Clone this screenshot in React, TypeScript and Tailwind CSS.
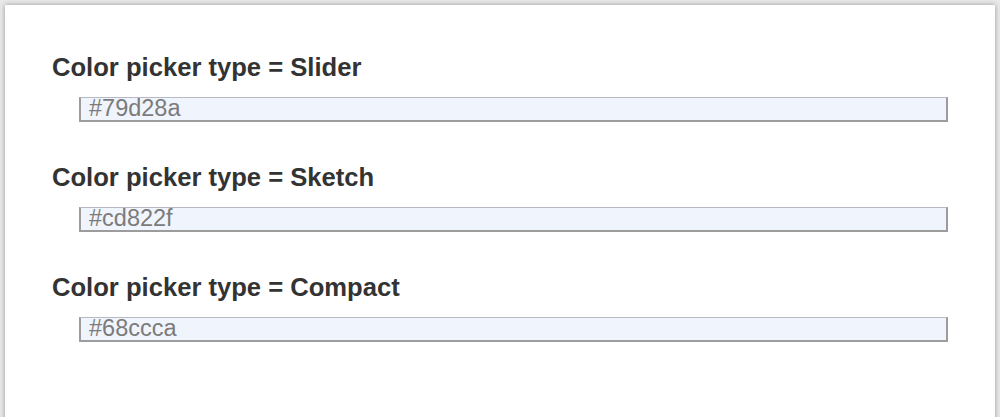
import React from "react";

const items = [
  { label: "Slider", value: "#79d28a" },
  { label: "Sketch", value: "#cd822f" },
  { label: "Compact", value: "#68ccca" },
];

export default function App() {
  return (
    <div className="w-[1000px] h-[417px] overflow-hidden bg-[#e8e8e8] pt-[5px] px-[5px]" style={{ fontFamily: '"Liberation Sans", Arial, sans-serif' }}>
      <div className="bg-white h-[440px] shadow-[0_0_5px_rgba(0,0,0,0.35)] pt-[47px] pl-[47px] flex flex-col gap-[40px]">
        {items.map((it) => (
          <div key={it.label} className="flex flex-col gap-[15px]">
            <div className="text-[25.6px] leading-[30px] font-bold text-[#333333]">
              Color picker type = {it.label}
            </div>
            <div className="ml-[27px] w-[869px] h-[25px] bg-[#f0f4fc] border-2 border-[#9c9c9c] border-t-[#b7b9c6] border-t-[1px] pl-[8px] flex items-center text-[23.5px] leading-none text-[#7b7b7b]">
              {it.value}
            </div>
          </div>
        ))}
      </div>
    </div>
  );
}
